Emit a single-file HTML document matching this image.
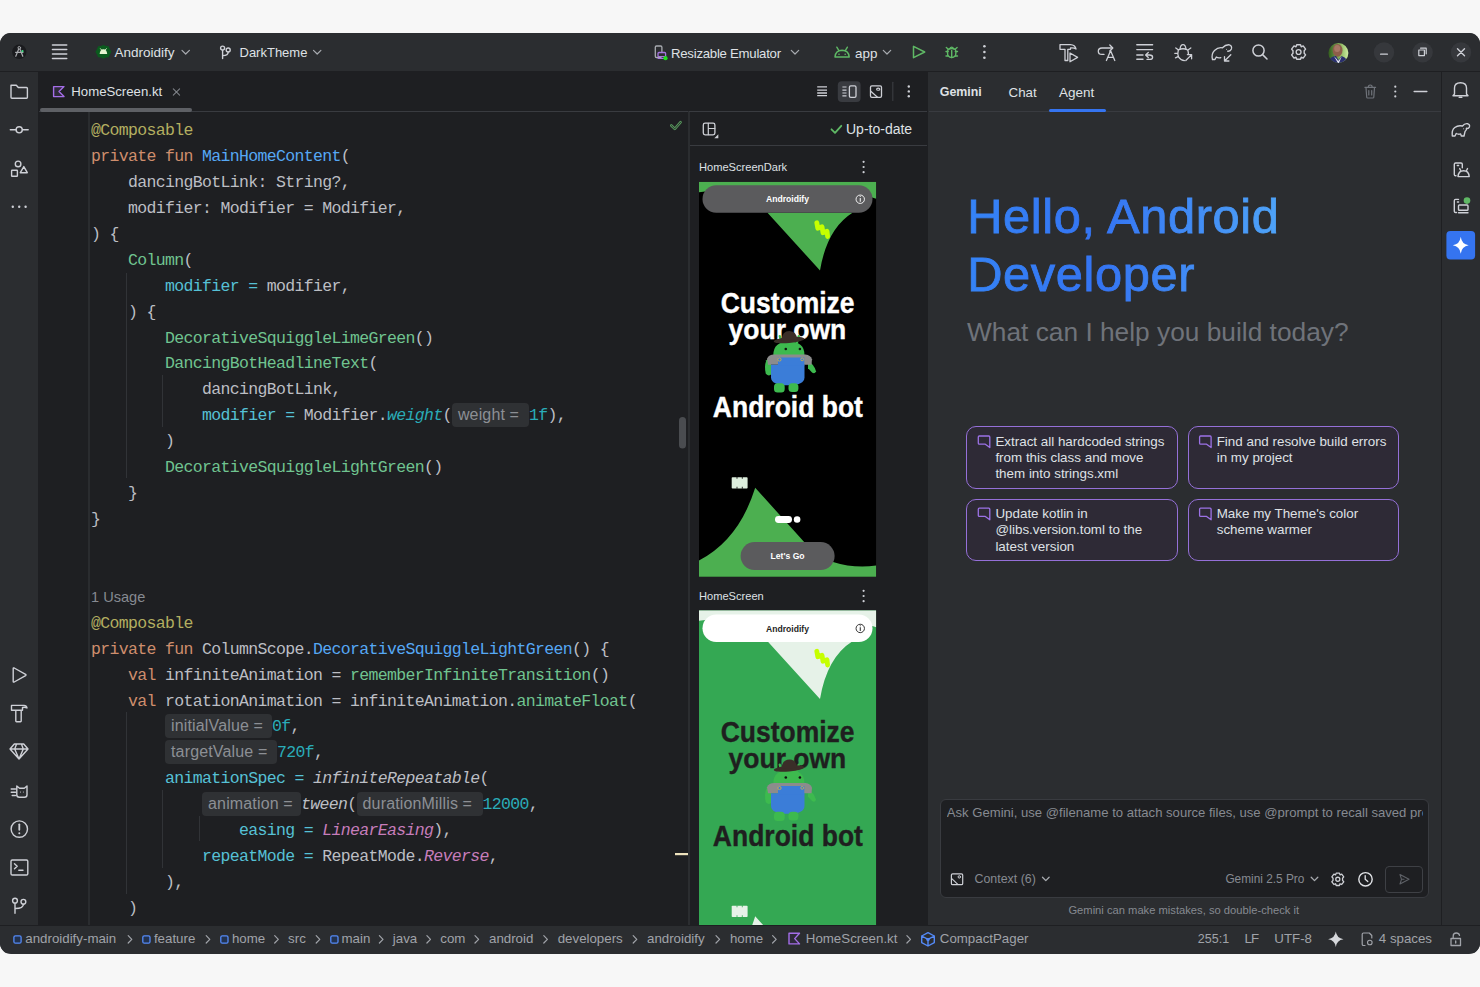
<!DOCTYPE html>
<html><head><meta charset="utf-8">
<style>
*{box-sizing:border-box;margin:0;padding:0}
html,body{width:1480px;height:987px;overflow:hidden;background:#F7F7F7;font-family:"Liberation Sans",sans-serif}
.a{position:absolute}
#win{position:absolute;left:0;top:33px;width:1480px;height:920.5px;border-radius:11px;background:#2B2D30;overflow:hidden}
.ui{color:#DFE1E5;font-size:14px;white-space:nowrap;line-height:1}
.code{font-family:"Liberation Mono",monospace;font-size:16.5px;letter-spacing:-0.65px;color:#BCBEC4;white-space:pre;line-height:25.93px}
.ln{position:absolute;left:91px;height:25.93px}
.kw{color:#CF8E6D}.fn{color:#56A8F5}.an{color:#B3AE60}.cp{color:#70C490}.na{color:#56C1D6}.nu{color:#2AACB8}
.it{font-style:italic}.en{color:#C77DBB;font-style:italic}
.hint{letter-spacing:0.15px;display:inline-block;vertical-align:top;height:23.5px;margin-top:0px;background:#2F3134;border-radius:4px;color:#8C8F94;font-family:"Liberation Sans",sans-serif;font-size:16px;line-height:23px;padding-left:6px}
svg{position:absolute;overflow:visible}
.sb{top:932.3px;font-size:13.3px;line-height:1;color:#A0A3A9;white-space:nowrap}
.card{width:211.5px;height:62.4px;border:1.5px solid #9570D8;border-radius:10px;background:#2E2A36}
.card span{position:absolute;left:28px;top:6.5px;font-size:13.4px;line-height:16.2px;color:#DFE1E5;white-space:nowrap}

</style></head><body>
<div id="win">
  <!-- title bar -->
  <div class="a" style="left:0;top:0;width:1480px;height:39px;background:#2B2D30;border-bottom:1px solid #1E1F22"></div>
  <!-- left strip -->
  <div class="a" style="left:0;top:39px;width:39px;height:854px;background:#2B2D30;border-right:1px solid #1E1F22"></div>
  <!-- editor -->
  <div class="a" style="left:39px;top:39px;width:889px;height:854px;background:#1E1F22"></div>
  <!-- gemini panel -->
  <div class="a" style="left:927px;top:39px;width:515px;height:854px;background:#2B2D30;border-left:1px solid #1E1F22"></div>
  <!-- right strip -->
  <div class="a" style="left:1441px;top:39px;width:39px;height:854px;background:#2B2D30;border-left:1px solid #1E1F22"></div>
  <!-- status bar -->
  <div class="a" style="left:0;top:892px;width:1480px;height:28px;background:#2B2D30;border-top:1px solid #1E1F22"></div>
</div>


<!-- ===== TITLE BAR ===== -->
<svg class="a" style="left:0;top:0" width="1480" height="987" viewBox="0 0 1480 987" fill="none" stroke="#CED0D6" stroke-width="1.4" stroke-linecap="round" stroke-linejoin="round">
  <!-- logo -->
  <circle cx="19.3" cy="51.8" r="7.2" fill="#1A1B1E" stroke="none"/>
  <circle cx="19.3" cy="47.8" r="1.3" stroke="#A9ABAF" stroke-width="1"/>
  <path d="M18.6 49.2 L15.8 56.3 M20 49.2 L22.8 56.3 M15.6 52.3 L23 52.3" stroke="#A9ABAF" stroke-width="1.2"/>
  <circle cx="22.5" cy="51.2" r="1.1" fill="#3DDC84" stroke="none"/>
  <!-- hamburger -->
  <path d="M52.5 45H66.7M52.5 49.5H66.7M52.5 54H66.7M52.5 58.5H66.7" stroke-width="1.6"/>
  <!-- androidify badge -->
  <path d="M103.4 44.9 l2.6 1.1 2.7 0.3 1.1 2.6 1.6 2.9 -1.6 2.9 -1.1 2.6 -2.7 0.3 -2.6 1.1 -2.6 -1.1 -2.7 -0.3 -1.1 -2.6 -1.6 -2.9 1.6 -2.9 1.1 -2.6 2.7 -0.3z" fill="#0B5A1E" stroke="none"/>
  <path d="M99.6 54 Q100 49.5 103.4 49.3 Q106.8 49.5 107.2 54 Z" fill="#E6F5D0" stroke="none"/>
  <path d="M100.5 48.7 L101.6 50 M106.3 48.7 L105.2 50" stroke="#E6F5D0" stroke-width="0.9"/>
  <!-- chevrons -->
  <path d="M182 50.3 L185.7 54 L189.4 50.3" stroke="#A8ABB0" stroke-width="1.2"/>
  <path d="M313.5 50.3 L317.2 54 L320.9 50.3" stroke="#A8ABB0" stroke-width="1.2"/>
  <!-- branch -->
  <circle cx="222.6" cy="48.1" r="2"/><circle cx="228.2" cy="50" r="2"/>
  <path d="M222.6 50.1V58.6 M228.2 52 Q228.2 55.5 222.8 55.6"/>
  <!-- emulator device -->
  <path d="M661 57.5 H656.5 Q655.3 57.5 655.3 56.3 V47.3 Q655.3 46 656.5 46 H660.6 Q661.9 46 661.9 47.3 V51.5" stroke="#A8ABB0" stroke-width="1.3"/>
  <rect x="658" y="52.5" width="7.6" height="4.2" rx="1" stroke="#A776E0" stroke-width="1.3"/>
  <path d="M658 58.5 H664" stroke="#A776E0" stroke-width="1"/>
  <circle cx="665.5" cy="58.2" r="2.1" fill="#1FE01F" stroke="none"/>
  <path d="M791.3 50.3 L795 54 L798.7 50.3" stroke="#A8ABB0" stroke-width="1.2"/>
  <!-- android app icon -->
  <path d="M835 57 Q835.5 50.5 842.1 50.3 Q848.7 50.5 849.2 57 Z" stroke="#5FB865" stroke-width="1.5"/>
  <path d="M836.8 47.2 L838.6 50.2 M847.4 47.2 L845.6 50.2" stroke="#5FB865" stroke-width="1.4"/>
  <circle cx="839" cy="54.3" r="0.8" fill="#5FB865" stroke="none"/><circle cx="845.2" cy="54.3" r="0.8" fill="#5FB865" stroke="none"/>
  <path d="M883.3 50.3 L887 54 L890.7 50.3" stroke="#A8ABB0" stroke-width="1.2"/>
  <!-- run -->
  <path d="M913.5 46.3 V57.7 L924.7 52 Z" stroke="#5FB865" stroke-width="1.5"/>
  <!-- debug bug -->
  <g stroke="#5FB865" stroke-width="1.4">
   <path d="M948 49.5 Q951.7 47.5 955.4 49.5 Q956.5 52 955.6 55.4 Q951.7 59.5 947.8 55.4 Q947 52 948 49.5Z"/>
   <path d="M949.6 48.8 Q951.7 45.5 953.8 48.8 M951.7 50.5V57.5 M946 51.5H948.2M955.3 51.5H957.5M946 56H948.2M955.3 56H957.5M946.3 47.5L948.3 49.2M957.1 47.5L955.1 49.2"/>
  </g>
  <!-- kebab -->
  <circle cx="984.4" cy="46.3" r="1.3" fill="#CED0D6" stroke="none"/><circle cx="984.4" cy="52" r="1.3" fill="#CED0D6" stroke="none"/><circle cx="984.4" cy="57.7" r="1.3" fill="#CED0D6" stroke="none"/>
  <!-- build/run hammer -->
  <path d="M1060 44.6 H1070.5 Q1075 44.8 1076 49 Q1073.5 47.5 1070.5 48 V49.3 H1067.8 V60.5 H1065 V49.3 H1060 Z" stroke-width="1.3"/>
  <path d="M1070 53 V61.8 L1077.6 57.4 Z" stroke-width="1.3"/>
  <!-- apply changes (C-arrow A) -->
  <path d="M1112.5 48 H1102 Q1098.3 48 1098.3 51.2 Q1098.3 54.4 1102 54.4 H1104" stroke-width="1.3"/>
  <path d="M1109.8 45 L1112.8 48 L1109.8 51" stroke-width="1.3"/>
  <path d="M1106.4 60.5 L1110.6 50.8 L1114.8 60.5 M1107.8 57.3 H1113.4" stroke-width="1.3"/>
  <!-- lines w/ return -->
  <path d="M1136.8 44.7H1152.6 M1136.8 49.6H1152.6 M1136.8 55H1143 M1136.8 59.3H1143" stroke-width="1.4"/>
  <path d="M1148.3 52.5 L1145.6 55 L1148.3 57.5 M1145.8 55H1149.5Q1152.6 55 1152.6 57.2Q1152.6 59.4 1149.5 59.4H1147" stroke-width="1.3"/>
  <!-- debug attach -->
  <g stroke-width="1.3">
   <path d="M1178.3 50 Q1183 47.5 1187.7 50 Q1188.6 52.5 1188.4 54 M1178.3 50 Q1177.2 54 1178.6 57.2 Q1181 60.6 1184.5 60.6"/>
   <path d="M1180 49.3 Q1180.5 44.6 1183 44.6 Q1185.5 44.6 1186 49.3 M1174.8 53.3H1177.5 M1175.5 57.8L1178 56.6 M1175.8 48L1178.2 49.8 M1190.8 48L1188.3 49.8"/>
   <path d="M1185.8 60.5 L1191.4 54.9 M1187.4 54.6 H1191.6 V58.8"/>
  </g>
  <!-- elephant sync -->
  <g stroke-width="1.3">
   <path d="M1212.5 59.5 Q1211 54 1214.5 50.5 Q1218 47 1222.5 47.8 Q1225.5 44.5 1229.3 44.8 Q1232.3 45.8 1231.4 49 Q1230.5 51.5 1227.6 51.2"/>
   <path d="M1212.5 59.5 H1215 L1216.3 57 Q1218.5 58.5 1220.8 57.6"/>
   <path d="M1224.5 61 L1230.8 54.7 M1224.5 56.6 V61 H1228.9"/>
   <circle cx="1226.5" cy="49.3" r="0.5" fill="#CED0D6" stroke="none"/>
  </g>
  <!-- search -->
  <circle cx="1258.5" cy="50.5" r="5.6" stroke-width="1.5"/><path d="M1262.6 54.6 L1267 59" stroke-width="1.5"/>
  <!-- gear -->
  <g transform="translate(1298.6 52)" stroke-width="1.4">
   <path d="M-1.9 -7.3 H1.9 L2.6 -5.2 L4.6 -6.1 L7 -2.9 L5.6 -1.2 L5.6 1.2 L7 2.9 L4.6 6.1 L2.6 5.2 L1.9 7.3 H-1.9 L-2.6 5.2 L-4.6 6.1 L-7 2.9 L-5.6 1.2 L-5.6 -1.2 L-7 -2.9 L-4.6 -6.1 L-2.6 -5.2 Z"/>
   <circle r="2.4"/>
  </g>
  <!-- avatar -->
  <defs>
   <linearGradient id="avbg" x1="0" y1="0" x2="1" y2="0"><stop offset="0" stop-color="#2F5A1A"/><stop offset="0.6" stop-color="#8DB860"/><stop offset="1" stop-color="#D4F0A8"/></linearGradient>
   <clipPath id="avc"><circle cx="1338.4" cy="53" r="10"/></clipPath>
  </defs>
  <g clip-path="url(#avc)" stroke="none">
   <rect x="1328" y="42" width="21" height="22" fill="url(#avbg)"/>
   <ellipse cx="1337.6" cy="50.3" rx="4.9" ry="6.4" fill="#8E5E4A"/>
   <ellipse cx="1337.2" cy="48.5" rx="3" ry="3.5" fill="#B48270" opacity="0.7"/>
   <path d="M1328 64 L1330 58.5 Q1333 55.5 1336 56 L1338.5 60 L1341.5 56 Q1345 57 1347 60 L1349 64 Z" fill="#2B2F6E"/>
   <path d="M1334 56.2 L1338.5 64 L1341.8 56.3 L1339.5 59.5 L1338.2 61 L1336.2 58.5 Z" fill="#E6E8F0"/>
  </g>
  <!-- window controls -->
  <circle cx="1384" cy="52.4" r="10.2" fill="#36383C" stroke="none"/>
  <circle cx="1422.6" cy="52.4" r="10.2" fill="#36383C" stroke="none"/>
  <circle cx="1461" cy="52.4" r="10.2" fill="#36383C" stroke="none"/>
  <path d="M1380.6 54.2 H1387.4" stroke-width="1.3"/>
  <rect x="1418.8" y="50" width="5.6" height="5.6" stroke-width="1.2"/>
  <path d="M1420.6 48.2 H1426.2 V53.8" stroke-width="1.2"/>
  <path d="M1457.5 48.8 L1464.5 55.8 M1464.5 48.8 L1457.5 55.8" stroke-width="1.4"/>
</svg>
<div class="a ui" style="left:114.5px;top:46px;font-size:13.5px">Androidify</div>
<div class="a ui" style="left:239.5px;top:46px;font-size:13px">DarkTheme</div>
<div class="a ui" style="left:671px;top:47px;font-size:13.2px;letter-spacing:-0.25px">Resizable Emulator</div>
<div class="a ui" style="left:855px;top:46.5px;font-size:13.4px">app</div>


<!-- ===== STRIPS / TABBAR ICONS ===== -->
<svg class="a" style="left:0;top:0" width="1480" height="987" viewBox="0 0 1480 987" fill="none" stroke="#CED0D6" stroke-width="1.4" stroke-linecap="round" stroke-linejoin="round">
  <!-- left strip top -->
  <path d="M11 85.2 H16.3 L18.3 87.5 H26.5 Q27.4 87.5 27.4 88.4 V97.3 Q27.4 98.2 26.5 98.2 H11.9 Q11 98.2 11 97.3 Z"/>
  <path d="M10.3 129.8 H16 M22.5 129.8 H28.2"/><circle cx="19.2" cy="129.8" r="3.1"/>
  <circle cx="18.1" cy="163.9" r="2.8"/><rect x="11.6" y="170.3" width="5.8" height="6" rx="0.6"/><path d="M23.8 166.6 L27.3 172.7 H20.3 Z"/>
  <circle cx="12.8" cy="206.8" r="1.2" fill="#CED0D6" stroke="none"/><circle cx="19.2" cy="206.8" r="1.2" fill="#CED0D6" stroke="none"/><circle cx="25.6" cy="206.8" r="1.2" fill="#CED0D6" stroke="none"/>
  <!-- left strip bottom -->
  <path d="M13.2 668.6 Q13.2 667.5 14.2 668 L25.6 674.4 Q26.4 675 25.6 675.6 L14.2 682 Q13.2 682.5 13.2 681.4 Z"/>
  <path d="M11.5 705.4 H24 Q26.5 705.4 27 708 Q25 706.8 22.5 707.5 V710.2 H11.5 Z M15.8 710.4 V721 Q15.8 721.7 16.5 721.7 H20.5 Q21.2 721.7 21.2 721 V710.4"/>
  <path d="M14.3 744 H23.7 L28 749 L19 759 L10 749 Z M10 749 H28 M16.5 744.2 L14.7 749 L19 759 L23.3 749 L21.5 744.2"/>
  <path d="M16.8 786 L19.5 788.2 H24.3 L27 786 V794.8 Q27 797.3 24.5 797.3 H19.3 Q16.8 797.3 16.8 794.8 Z M11.2 789 H15.5 M11.2 792.3 H15.5 M12.2 795.5 H15.5"/>
  <circle cx="20.5" cy="792" r="0.55" fill="#CED0D6" stroke="none"/><circle cx="23.4" cy="792" r="0.55" fill="#CED0D6" stroke="none"/>
  <circle cx="19.3" cy="829.1" r="8.2"/><path d="M19.3 824.3 V829.8" stroke-width="1.8"/><circle cx="19.3" cy="833.3" r="1" fill="#CED0D6" stroke="none"/>
  <rect x="11" y="860" width="16.8" height="15" rx="1.3"/><path d="M14.5 863.8 L17.2 866.3 L14.5 868.8 M18.8 870.3 H23"/>
  <circle cx="15" cy="900.7" r="2.4"/><circle cx="23.4" cy="901.8" r="2.4"/><path d="M15 903.1 V913.2 M23.4 904.2 Q23.4 908.5 15.2 908.5"/>
  <!-- right strip -->
  <path d="M1454.5 94 V88 Q1454.5 82.7 1460.5 82.7 Q1466.5 82.7 1466.5 88 V94 L1468 95.8 H1453 Z M1459.2 97.4 H1461.8"/>
  <path d="M1452.3 136 Q1451.5 130 1454.8 127.5 Q1458 125 1462.5 126 Q1464.5 123.3 1467.5 123.7 Q1470.2 124.5 1469.4 127 Q1468.5 129 1466.3 128.4 M1452.3 136 H1455 L1456.2 133.5 Q1458.5 134.7 1460.6 133.9 L1461.3 136 H1464 L1465 131.6 Q1466.8 130 1466.6 128.2"/>
  <circle cx="1463.6" cy="128.8" r="0.5" fill="#CED0D6" stroke="none"/>
  <path d="M1456 175.7 H1455.6 Q1454.3 175.7 1454.3 174.4 V164.3 Q1454.3 163 1455.6 163 H1461 Q1462.3 163 1462.3 164.3 V167.8 M1457.3 165.5 H1458.6"/>
  <path d="M1458 176.6 Q1458.5 170.8 1463.6 170.8 Q1468.7 170.8 1469.2 176.6 Z M1459.7 168.6 L1460.7 170.5 M1467.5 168.6 L1466.5 170.5"/>
  <path d="M1456.5 212.5 H1455.6 Q1454.3 212.5 1454.3 211.2 V200.7 Q1454.3 199.4 1455.6 199.4 H1458.5 M1457.4 202 H1458.6"/>
  <rect x="1458.5" y="205" width="9.5" height="5.3" rx="0.9"/><path d="M1458.5 212.8 H1468"/>
  <circle cx="1467" cy="200.6" r="3.3" fill="#5FB865" stroke="none"/>
  <rect x="1446.4" y="231" width="28.7" height="28.5" rx="4" fill="#3574F0" stroke="none"/>
  <path d="M1460.75 236.8 Q1461.6 244.2 1468.7 245.25 Q1461.6 246.3 1460.75 253.7 Q1459.9 246.3 1452.8 245.25 Q1459.9 244.2 1460.75 236.8 Z" fill="#FFFFFF" stroke="none"/>
  <!-- tab -->
  <path d="M53.6 86.6 H64 L59 91.6 L64 96.6 H53.6 Z" fill="#2E2A3A" stroke="#A46EE8" stroke-width="1.4"/>
  <path d="M173.3 88.8 L179.6 95.1 M179.6 88.8 L173.3 95.1" stroke="#7E8187" stroke-width="1.1"/>
  <!-- editor toolbar -->
  <path d="M817.2 86.9 H827 M817.2 90.2 H827 M817.2 93 H827 M817.2 95.7 H827" stroke-width="1.3" stroke-linecap="butt"/>
  <rect x="837.8" y="81.2" width="22.8" height="20.7" rx="4" fill="#393B40" stroke="none"/>
  <path d="M842.4 87 H846.5 M842.4 90.2 H846.5 M842.4 93 H846.5 M842.4 95.8 H846.5" stroke-width="1.2" stroke-linecap="butt"/>
  <rect x="849.4" y="85.9" width="6.6" height="11.4" rx="1.4" stroke-width="1.3"/>
  <rect x="870.5" y="85.9" width="11" height="11.4" rx="1.4" stroke-width="1.3"/>
  <path d="M870.8 91.2 L877.5 97.2" stroke-width="1.2"/><ellipse cx="878.2" cy="89.2" rx="1.6" ry="1.1" stroke-width="1.1"/>
  <path d="M892.8 82.3 V100.5" stroke="#393B40" stroke-width="1.2"/>
  <circle cx="908.8" cy="86.5" r="1.2" fill="#CED0D6" stroke="none"/><circle cx="908.8" cy="91.4" r="1.2" fill="#CED0D6" stroke="none"/><circle cx="908.8" cy="96.2" r="1.2" fill="#CED0D6" stroke="none"/>
  <!-- editor marks -->
  <path d="M671.3 125.5 L674.8 128.9 L680.6 122.2" stroke="#57965C" stroke-width="2.6"/>
  <path d="M671.3 125.5 L674.8 128.9 L680.6 122.2" stroke="#1E1F22" stroke-width="0.8"/>
  <rect x="679" y="417" width="7" height="31.4" rx="3.5" fill="#4A4C50" stroke="none"/>
  <rect x="675" y="853" width="13.8" height="2.2" fill="#EFE3BE" stroke="none"/>
  <!-- preview toolbar -->
  <rect x="703.3" y="123.2" width="11.6" height="11.6" rx="1.8" stroke-width="1.3"/><path d="M708.3 123.4 V134.6 M708.3 128.5 H714.8" stroke-width="1.2"/>
  <path d="M718.3 134.2 V138.2 H714.3 Z" fill="#CED0D6" stroke="none"/>
  <path d="M831.5 129.3 L835 132.8 L841.3 125.8" stroke="#5FB865" stroke-width="1.8"/>
  <circle cx="863.6" cy="161.8" r="1.1" fill="#CED0D6" stroke="none"/><circle cx="863.6" cy="167" r="1.1" fill="#CED0D6" stroke="none"/><circle cx="863.6" cy="172.2" r="1.1" fill="#CED0D6" stroke="none"/>
  <circle cx="863.6" cy="590.8" r="1.1" fill="#CED0D6" stroke="none"/><circle cx="863.6" cy="596" r="1.1" fill="#CED0D6" stroke="none"/><circle cx="863.6" cy="601.2" r="1.1" fill="#CED0D6" stroke="none"/>
</svg>
<div class="a ui" style="left:71.3px;top:85px;font-size:13.2px">HomeScreen.kt</div>
<div class="a ui" style="left:846px;top:122px;font-size:14px">Up-to-date</div>
<div class="a ui" style="left:699px;top:161.5px;font-size:11.1px">HomeScreenDark</div>
<div class="a ui" style="left:699px;top:590.5px;font-size:11.1px">HomeScreen</div>


<!-- ===== GEMINI PANEL ===== -->
<div class="a" style="left:929px;top:111px;width:512px;height:1px;background:#393B40"></div>
<div class="a" style="left:1048.7px;top:108.5px;width:57.3px;height:3px;border-radius:2px;background:#3574F0"></div>
<div class="a ui" style="left:939.8px;top:86px;font-size:12.4px;font-weight:700">Gemini</div>
<div class="a ui" style="left:1008.6px;top:86px;font-size:13.3px">Chat</div>
<div class="a ui" style="left:1059px;top:86px;font-size:13.5px">Agent</div>
<svg class="a" style="left:0;top:0" width="1480" height="987" viewBox="0 0 1480 987">
 <defs><linearGradient id="hg" gradientUnits="userSpaceOnUse" x1="969" y1="0" x2="1280" y2="0"><stop offset="0" stop-color="#3583F6"/><stop offset="0.42" stop-color="#3474F3"/><stop offset="1" stop-color="#4EA3F8"/></linearGradient></defs>
 <g font-family="Liberation Sans" font-size="48.8" letter-spacing="0.6" fill="url(#hg)" stroke="url(#hg)" stroke-width="0.8">
  <text x="967.2" y="233.4">Hello, Android</text>
  <text x="967.2" y="290.6">Developer</text>
 </g>
</svg>
<div class="a" style="left:967px;top:319px;font-size:26.3px;line-height:1;white-space:nowrap;color:#6F737A">What can I help you build today?</div>
<div class="a card" style="left:966.4px;top:426.4px"><span>Extract all hardcoded strings<br>from this class and move<br>them into strings.xml</span></div>
<div class="a card" style="left:1187.7px;top:426.4px"><span>Find and resolve build errors<br>in my project</span></div>
<div class="a card" style="left:966.4px;top:498.6px"><span>Update kotlin in<br>@libs.version.toml to the<br>latest version</span></div>
<div class="a card" style="left:1187.7px;top:498.6px"><span>Make my Theme's color<br>scheme warmer</span></div>
<!-- input -->
<div class="a" style="left:940px;top:799.3px;width:488.5px;height:98.4px;border:1px solid #393B40;border-radius:6px;background:#1E1F22"></div>
<div class="a" style="left:946.8px;top:806px;width:476px;overflow:hidden;font-size:13.1px;line-height:1;white-space:nowrap;color:#868A91">Ask Gemini, use @filename to attach source files, use @prompt to recall saved prompts</div>
<div class="a" style="left:974.5px;top:873.3px;font-size:12.4px;line-height:1;white-space:nowrap;color:#868A91">Context (6)</div>
<div class="a" style="left:1225.4px;top:874px;font-size:11.85px;line-height:1;white-space:nowrap;color:#868A91">Gemini 2.5 Pro</div>
<div class="a" style="left:1068.4px;top:904.5px;font-size:11.2px;line-height:1;white-space:nowrap;color:#868A91">Gemini can make mistakes, so double-check it</div>
<svg class="a" style="left:0;top:0" width="1480" height="987" viewBox="0 0 1480 987" fill="none" stroke="#CED0D6" stroke-width="1.3" stroke-linecap="round" stroke-linejoin="round">
  <g stroke="#6F737A" stroke-width="1.2"><path d="M1364.9 87.3 H1375.6 M1368.3 87.2 Q1368.3 85 1370.2 85 Q1372.2 85 1372.2 87.2 M1366 87.5 L1366.7 97.2 Q1366.8 98 1367.6 98 H1372.9 Q1373.7 98 1373.8 97.2 L1374.5 87.5 M1368.8 90.5 V95 M1371.7 90.5 V95"/></g>
  <circle cx="1395.3" cy="86.7" r="1.1" fill="#CED0D6" stroke="none"/><circle cx="1395.3" cy="91.5" r="1.1" fill="#CED0D6" stroke="none"/><circle cx="1395.3" cy="96.4" r="1.1" fill="#CED0D6" stroke="none"/>
  <path d="M1414.2 91.4 H1426.8" stroke-width="1.5"/>
  <!-- card icons -->
  <g stroke="#9C72E6" stroke-width="1.3">
    <path d="M979.3 436 H988.8 Q989.8 436 989.8 437 V447.6 L985.3 444.2 H979.3 Q978.3 444.2 978.3 443.2 V437.0 Q978.3 436 979.3 436 Z"/>
    <path d="M1200.6 436 H1210.1 Q1211.1 436 1211.1 437 V447.6 L1206.6 444.2 H1200.6 Q1199.6 444.2 1199.6 443.2 V437.0 Q1199.6 436 1200.6 436 Z"/>
    <path d="M979.3 508.2 H988.8 Q989.8 508.2 989.8 509.2 V519.8 L985.3 516.4 H979.3 Q978.3 516.4 978.3 515.4 V509.2 Q978.3 508.2 979.3 508.2 Z"/>
    <path d="M1200.6 508.2 H1210.1 Q1211.1 508.2 1211.1 509.2 V519.8 L1206.6 516.4 H1200.6 Q1199.6 516.4 1199.6 515.4 V509.2 Q1199.6 508.2 1200.6 508.2 Z"/>
  </g>
  <!-- input icons -->
  <rect x="951.4" y="873.8" width="11.3" height="10.9" rx="1.3" stroke-width="1.2"/>
  <path d="M951.8 878.7 L957.8 884.4" stroke-width="1.1"/><circle cx="959.3" cy="876.9" r="1.2" stroke-width="1"/>
  <path d="M1042.5 877.3 L1045.8 880.6 L1049.1 877.3" stroke="#A8ABB0" stroke-width="1.3"/>
  <path d="M1311.2 877.3 L1314.5 880.6 L1317.8 877.3" stroke="#A8ABB0" stroke-width="1.3"/>
  <g transform="translate(1337.8 879.3) scale(0.85)" stroke-width="1.5">
   <path d="M-1.9 -7.3 H1.9 L2.6 -5.2 L4.6 -6.1 L7 -2.9 L5.6 -1.2 L5.6 1.2 L7 2.9 L4.6 6.1 L2.6 5.2 L1.9 7.3 H-1.9 L-2.6 5.2 L-4.6 6.1 L-7 2.9 L-5.6 1.2 L-5.6 -1.2 L-7 -2.9 L-4.6 -6.1 L-2.6 -5.2 Z"/>
   <circle r="2.4"/>
  </g>
  <circle cx="1365.5" cy="879.3" r="6.7" stroke="#E0E2E6" stroke-width="1.4"/><path d="M1365.2 875.6 V879.3 L1367.8 881.6" stroke="#E0E2E6" stroke-width="1.3"/>
  <rect x="1385.5" y="866.5" width="37" height="26" rx="3.5" stroke="#3E4045" stroke-width="1"/>
  <path d="M1400 874.6 L1409 879.3 L1400 884 L1401.5 879.3 Z M1401.5 879.3 H1404" stroke="#5E6167" stroke-width="1.1"/>
</svg>


<!-- ===== STATUS BAR ===== -->
<div class="a sb" style="left:25.3px">androidify-main</div>
<div class="a sb" style="left:153.9px">feature</div>
<div class="a sb" style="left:231.9px">home</div>
<div class="a sb" style="left:288.1px">src</div>
<div class="a sb" style="left:341.5px">main</div>
<div class="a sb" style="left:392.8px">java</div>
<div class="a sb" style="left:440.3px">com</div>
<div class="a sb" style="left:489px">android</div>
<div class="a sb" style="left:557.7px">developers</div>
<div class="a sb" style="left:647px">androidify</div>
<div class="a sb" style="left:729.9px">home</div>
<div class="a sb" style="left:805.8px">HomeScreen.kt</div>
<div class="a sb" style="left:939.8px">CompactPager</div>
<div class="a sb" style="left:1197.8px;font-size:12.5px;top:933px">255:1</div>
<div class="a sb" style="left:1244.5px;letter-spacing:-1px">LF</div>
<div class="a sb" style="left:1274.3px">UTF-8</div>
<div class="a sb" style="left:1378.8px">4 spaces</div>
<svg class="a" style="left:0;top:0" width="1480" height="987" viewBox="0 0 1480 987" fill="none" stroke="#A0A3A9" stroke-width="1.2" stroke-linecap="round" stroke-linejoin="round">
  <path d="M128.2 935.6 L131.8 939.3 L128.2 943 M206.2 935.6 L209.8 939.3 L206.2 943 M274.7 935.6 L278.3 939.3 L274.7 943 M316.2 935.6 L319.8 939.3 L316.2 943 M379.4 935.6 L383.0 939.3 L379.4 943 M426.9 935.6 L430.5 939.3 L426.9 943 M475.0 935.6 L478.6 939.3 L475.0 943 M543.8 935.6 L547.4 939.3 L543.8 943 M633.2 935.6 L636.8 939.3 L633.2 943 M716.0 935.6 L719.6 939.3 L716.0 943 M772.6 935.6 L776.2 939.3 L772.6 943 M906.9 935.6 L910.5 939.3 L906.9 943"/>
  <rect x="13.9" y="935.8" width="7.2" height="7.4" rx="1.5" fill="#22324F" stroke="#548AF7" stroke-width="1.3"/>
<rect x="142.8" y="935.8" width="7.2" height="7.4" rx="1.5" fill="#22324F" stroke="#548AF7" stroke-width="1.3"/>
<rect x="220.8" y="935.8" width="7.2" height="7.4" rx="1.5" fill="#22324F" stroke="#548AF7" stroke-width="1.3"/>
<rect x="330.8" y="935.8" width="7.2" height="7.4" rx="1.5" fill="#22324F" stroke="#548AF7" stroke-width="1.3"/>
  <path d="M789 933.3 H799.5 L794.7 938.6 L799.5 943.9 H789 Z" fill="#2E2A3A" stroke="#A46EE8" stroke-width="1.4"/>
  <path d="M928 932.6 L934.3 936 V942.6 L928 946 L921.7 942.6 V936 Z M921.7 936 L928 939.4 L934.3 936 M928 939.4 V946" stroke="#548AF7" stroke-width="1.4"/>
  <circle cx="928" cy="939.6" r="1.7" fill="#548AF7" stroke="none"/>
  <path d="M1335.8 931.6 Q1336.7 938.3 1343.5 939.3 Q1336.7 940.3 1335.8 947 Q1334.9 940.3 1328.1 939.3 Q1334.9 938.3 1335.8 931.6 Z" fill="#D6D8DC" stroke="none"/>
  <path d="M1365 945.5 H1363.5 Q1362.2 945.5 1362.2 944.2 V934.3 Q1362.2 933 1363.5 933 H1369.3 L1371.8 935.5 V938" stroke-width="1.2"/>
  <circle cx="1369.8" cy="942.5" r="2.3" stroke-width="1.1"/>
  <path d="M1451 938.5 H1460.5 V945.5 H1451 Z M1453.2 938.5 V936 Q1453.2 933 1456.3 933 Q1459 933 1459.5 935.3" stroke-width="1.3"/>
  <path d="M1455.7 941 V943" stroke-width="1.4"/>
</svg>

<!-- ===== PREVIEW ===== -->
<svg class="a" style="left:0;top:0" width="1480" height="987" viewBox="0 0 1480 987">
<clipPath id="ph1"><rect x="0" y="0" width="177.25" height="395"/></clipPath>
<g transform="translate(699 181.75)" clip-path="url(#ph1)">
 <rect x="0" y="0" width="177.25" height="395" fill="#000000"/>
 <path d="M0 0 H177.25 V17 Q150 7 88 6 Q30 6 0 10.6 Z" fill="#4CAF50"/>
 <path d="M68.5 31 H153.5 Q128 47 121 88.75 Z" fill="#4CAF50"/>
 <path d="M117.8 41 L118.8 46.5 L123 45 L124 51 L128 49.5 L128.6 54.8" stroke="#C6FF00" stroke-width="4.8" stroke-linecap="round" stroke-linejoin="round" fill="none"/>
 <rect x="3.5" y="3.5" width="170" height="27.5" rx="13.75" fill="#5B5B5D"/>
 <text x="88.5" y="20.6" text-anchor="middle" font-family="Liberation Sans" font-weight="700" font-size="8.6" fill="#FFFFFF">Androidify</text>
 <circle cx="161.25" cy="17.5" r="4.2" stroke="#FFFFFF" stroke-width="0.9" fill="none"/>
 <path d="M161.25 16.3 V20" stroke="#FFFFFF" stroke-width="1"/>
 <circle cx="161.25" cy="14.8" r="0.55" fill="#FFFFFF"/>
 <text transform="translate(88.6 131.3) scale(1 1.1)" text-anchor="middle" font-family="Liberation Sans" font-weight="700" font-size="26.5" fill="#FFFFFF" stroke="#FFFFFF" stroke-width="0.35">Customize</text>
 <text transform="translate(88.4 157.7) scale(1 1.07)" text-anchor="middle" font-family="Liberation Sans" font-weight="700" font-size="26.5" fill="#FFFFFF" stroke="#FFFFFF" stroke-width="0.35">your own</text>
 <text transform="translate(88.9 235.3) scale(1 1.1)" text-anchor="middle" font-family="Liberation Sans" font-weight="700" font-size="26.5" fill="#FFFFFF" stroke="#FFFFFF" stroke-width="0.35">Android bot</text>
 <!-- bot -->
 <g>
  <path d="M82.5 160.5 L80.8 154.5 M98 160.5 L99.7 154.5" stroke="#3DBA4E" stroke-width="2.4" stroke-linecap="round"/>
  <path d="M74.3 173.5 Q74.3 159.8 90 159.8 Q105.5 159.8 105.5 173.5 Z" fill="#3DBA4E"/>
  <circle cx="86.8" cy="167.3" r="1.3" fill="#111"/><circle cx="100.9" cy="167.3" r="1.3" fill="#111"/>
  <ellipse cx="90" cy="158.3" rx="15.3" ry="3" fill="#3A2E28" transform="rotate(-5 90 158.3)"/>
  <path d="M82.5 158.5 Q83 149.3 90.5 149.2 Q97.5 149.5 98.2 157.5 Z" fill="#3A2E28"/>
  <path d="M66.8 192 Q65 185 67.3 178.5 Q69 176.5 71.5 177.5 L72.8 192 Q70 195.5 66.8 192 Z" fill="#3DBA4E"/>
  <path d="M109 179.5 Q114.8 182 117 189.5 Q116 192.3 113.3 191 L109 186.5 Z" fill="#3DBA4E"/>
  <path d="M68 177 Q70 172.8 75 172.8 H106.5 Q111.5 173.3 113 177.5 L112.5 183 H69 Z" fill="#8C8C8C"/>
  <path d="M72 183 H105.5 V195.5 Q105.5 203.5 89 203.5 Q72 203.5 72 195.5 Z" fill="#3B7DD8"/>
  <path d="M79 175.8 H105.3 V184 H79 Z" fill="#3B7DD8"/>
  <rect x="75" y="201.5" width="10.7" height="9.2" rx="3.5" fill="#3DBA4E"/><rect x="89.5" y="201.5" width="9.9" height="8.8" rx="3.5" fill="#3DBA4E"/>
  <circle cx="80.5" cy="177.8" r="1.6" stroke="#D9B23A" stroke-width="0.8" fill="none"/><circle cx="103.2" cy="177.6" r="1.4" stroke="#D9B23A" stroke-width="0.8" fill="none"/>
 </g>
 <path d="M33.5 295.5 H47.8 Q48.6 295.5 48.6 296.3 V306 Q48.6 306.8 47.8 306.8 H33.5 Q32.7 306.8 32.7 306 V296.3 Q32.7 295.5 33.5 295.5 Z" fill="#DDEEDD"/>
 <path d="M38 295 V307 M43.3 295 V307" stroke="#000000" stroke-width="0.8" stroke-dasharray="2 8"/>
 <path d="M0 378.75 Q40 358 56.2 306.05 L104.7 359.65 Q118 375 134 380.25 Q155 387 177.25 383.85 V400 H0 Z" fill="#4CAF50"/>
 <rect x="76" y="334.35" width="17" height="6.9" rx="3.45" fill="#FFFFFF"/>
 <circle cx="98.1" cy="337.8" r="3.3" fill="#FFFFFF"/>
 <rect x="41.6" y="360.35" width="94" height="27.9" rx="13.95" fill="#5B5B5D"/>
 <text x="88.6" y="377.5" text-anchor="middle" font-family="Liberation Sans" font-weight="700" font-size="8.6" fill="#FFFFFF">Let's Go</text>
</g>
<clipPath id="ph2"><rect x="0" y="0" width="177.25" height="314.75"/></clipPath>
<g transform="translate(699 610.25)" clip-path="url(#ph2)">
 <rect x="0" y="0" width="177.25" height="314.75" fill="#34A853"/>
 <path d="M0 0 H177.25 V17 Q150 7 88 6 Q30 6 0 10.6 Z" fill="#E6F2E8"/>
 <path d="M68.5 31 H153.5 Q128 47 121 88.75 Z" fill="#E6F2E8"/>
 <path d="M117.8 41 L118.8 46.5 L123 45 L124 51 L128 49.5 L128.6 54.8" stroke="#C6FF00" stroke-width="4.8" stroke-linecap="round" stroke-linejoin="round" fill="none"/>
 <rect x="3.5" y="4.2" width="170" height="27.5" rx="13.75" fill="#FFFFFF"/>
 <text x="88.5" y="21.3" text-anchor="middle" font-family="Liberation Sans" font-weight="700" font-size="8.6" fill="#1F1F1F">Androidify</text>
 <circle cx="161.25" cy="18.2" r="4.2" stroke="#1F1F1F" stroke-width="0.9" fill="none"/>
 <path d="M161.25 17 V20.7" stroke="#1F1F1F" stroke-width="1"/>
 <circle cx="161.25" cy="15.5" r="0.55" fill="#1F1F1F"/>
 <text transform="translate(88.6 131.3) scale(1 1.1)" text-anchor="middle" font-family="Liberation Sans" font-weight="700" font-size="26.5" fill="#1F1F1F" stroke="#1F1F1F" stroke-width="0.35">Customize</text>
 <text transform="translate(88.4 157.7) scale(1 1.07)" text-anchor="middle" font-family="Liberation Sans" font-weight="700" font-size="26.5" fill="#1F1F1F" stroke="#1F1F1F" stroke-width="0.35">your own</text>
 <text transform="translate(88.9 235.3) scale(1 1.1)" text-anchor="middle" font-family="Liberation Sans" font-weight="700" font-size="26.5" fill="#1F1F1F" stroke="#1F1F1F" stroke-width="0.35">Android bot</text>
 <!-- bot -->
 <g>
  <path d="M82.5 160.5 L80.8 154.5 M98 160.5 L99.7 154.5" stroke="#3DBA4E" stroke-width="2.4" stroke-linecap="round"/>
  <path d="M74.3 173.5 Q74.3 159.8 90 159.8 Q105.5 159.8 105.5 173.5 Z" fill="#3DBA4E"/>
  <circle cx="86.8" cy="167.3" r="1.3" fill="#111"/><circle cx="100.9" cy="167.3" r="1.3" fill="#111"/>
  <ellipse cx="90" cy="158.3" rx="15.3" ry="3" fill="#3A2E28" transform="rotate(-5 90 158.3)"/>
  <path d="M82.5 158.5 Q83 149.3 90.5 149.2 Q97.5 149.5 98.2 157.5 Z" fill="#3A2E28"/>
  <path d="M66.8 192 Q65 185 67.3 178.5 Q69 176.5 71.5 177.5 L72.8 192 Q70 195.5 66.8 192 Z" fill="#3DBA4E"/>
  <path d="M109 179.5 Q114.8 182 117 189.5 Q116 192.3 113.3 191 L109 186.5 Z" fill="#3DBA4E"/>
  <path d="M68 177 Q70 172.8 75 172.8 H106.5 Q111.5 173.3 113 177.5 L112.5 183 H69 Z" fill="#8C8C8C"/>
  <path d="M72 183 H105.5 V195.5 Q105.5 203.5 89 203.5 Q72 203.5 72 195.5 Z" fill="#3B7DD8"/>
  <path d="M79 175.8 H105.3 V184 H79 Z" fill="#3B7DD8"/>
  <rect x="75" y="201.5" width="10.7" height="9.2" rx="3.5" fill="#3DBA4E"/><rect x="89.5" y="201.5" width="9.9" height="8.8" rx="3.5" fill="#3DBA4E"/>
  <circle cx="80.5" cy="177.8" r="1.6" stroke="#D9B23A" stroke-width="0.8" fill="none"/><circle cx="103.2" cy="177.6" r="1.4" stroke="#D9B23A" stroke-width="0.8" fill="none"/>
 </g>
 <path d="M33.5 295.5 H47.8 Q48.6 295.5 48.6 296.3 V306 Q48.6 306.8 47.8 306.8 H33.5 Q32.7 306.8 32.7 306 V296.3 Q32.7 295.5 33.5 295.5 Z" fill="#E6F2E8"/>
 <path d="M38 295 V307 M43.3 295 V307" stroke="#34A853" stroke-width="0.8" stroke-dasharray="2 8"/>
 <path d="M0 378.75 Q40 358 56.2 306.05 L104.7 359.65 Q118 375 134 380.25 Q155 387 177.25 383.85 V400 H0 Z" fill="#E6F2E8"/>
 <rect x="76" y="334.35" width="17" height="6.9" rx="3.45" fill="#FFFFFF"/>
 <circle cx="98.1" cy="337.8" r="3.3" fill="#FFFFFF"/>
 <rect x="41.6" y="360.35" width="94" height="27.9" rx="13.95" fill="#5B5B5D"/>
 <text x="88.6" y="377.5" text-anchor="middle" font-family="Liberation Sans" font-weight="700" font-size="8.6" fill="#FFFFFF">Let's Go</text>
</g>
</svg>
<!-- ===== /PREVIEW ===== -->
<!-- indent guides -->
<div class="a" style="left:126px;top:272.8px;width:1px;height:205.1px;background:#313337"></div>
<div class="a" style="left:162px;top:375.3px;width:1px;height:51.3px;background:#313337"></div>
<div class="a" style="left:126px;top:711.5px;width:1px;height:182.9px;background:#313337"></div>
<div class="a" style="left:162px;top:789.6px;width:1px;height:78.0px;background:#313337"></div>
<div class="a" style="left:199px;top:816.4px;width:1px;height:24.6px;background:#313337"></div>
<!-- editor gutter line -->
<div class="a" style="left:88px;top:112px;width:2px;height:813px;background:#2A2C2F"></div>
<!-- tab bar bottom line -->
<div class="a" style="left:39px;top:111px;width:650px;height:1px;background:#393B40"></div>
<div class="a" style="left:40px;top:108px;width:152px;height:4px;border-radius:2px;background:#5E6065"></div>
<!-- preview separator -->
<div class="a" style="left:688px;top:111px;width:2px;height:814px;background:#2B2D30"></div>
<div class="a" style="left:689px;top:111px;width:238px;height:1px;background:#393B40"></div>
<div class="a" style="left:690px;top:145px;width:237px;height:1px;background:#393B40"></div>
<div class="ln code" style="top:118.10px"><span class="an">@Composable</span></div>
<div class="ln code" style="top:144.03px"><span class="kw">private fun </span><span class="fn">MainHomeContent</span>(</div>
<div class="ln code" style="top:169.96px">    dancingBotLink: String?,</div>
<div class="ln code" style="top:195.89px">    modifier: Modifier = Modifier,</div>
<div class="ln code" style="top:221.82px">) {</div>
<div class="ln code" style="top:247.75px">    <span class="cp">Column</span>(</div>
<div class="ln code" style="top:273.68px">        <span class="na">modifier =</span> modifier,</div>
<div class="ln code" style="top:299.61px">    ) {</div>
<div class="ln code" style="top:325.54px">        <span class="cp">DecorativeSquiggleLimeGreen</span>()</div>
<div class="ln code" style="top:351.47px">        <span class="cp">DancingBotHeadlineText</span>(</div>
<div class="ln code" style="top:377.40px">            dancingBotLink,</div>
<div class="ln code" style="top:403.33px">            <span class="na">modifier =</span> Modifier.<span class="nu it">weight</span>(<span class="hint" style="width:77px">weight =</span><span class="nu">1f</span>),</div>
<div class="ln code" style="top:429.26px">        )</div>
<div class="ln code" style="top:455.19px">        <span class="cp">DecorativeSquiggleLightGreen</span>()</div>
<div class="ln code" style="top:481.12px">    }</div>
<div class="ln code" style="top:507.05px">}</div>
<div class="ln code" style="top:532.98px"></div>
<div class="ln code" style="top:558.91px"></div>
<div class="ln code" style="top:584.84px"><span style="font-family:'Liberation Sans',sans-serif;letter-spacing:0;font-size:14.6px;color:#868A91">1 Usage</span></div>
<div class="ln code" style="top:610.77px"><span class="an">@Composable</span></div>
<div class="ln code" style="top:636.70px"><span class="kw">private fun </span>ColumnScope.<span class="fn">DecorativeSquiggleLightGreen</span>() {</div>
<div class="ln code" style="top:662.63px">    <span class="kw">val </span>infiniteAnimation = <span class="cp">rememberInfiniteTransition</span>()</div>
<div class="ln code" style="top:688.56px">    <span class="kw">val </span>rotationAnimation = infiniteAnimation.<span class="cp">animateFloat</span>(</div>
<div class="ln code" style="top:714.49px">        <span class="hint" style="width:107px">initialValue =</span><span class="nu">0f</span>,</div>
<div class="ln code" style="top:740.42px">        <span class="hint" style="width:112px">targetValue =</span><span class="nu">720f</span>,</div>
<div class="ln code" style="top:766.35px">        <span class="na">animationSpec =</span> <span class="it">infiniteRepeatable</span>(</div>
<div class="ln code" style="top:792.28px">            <span class="hint" style="width:99px">animation =</span><span class="it">tween</span>(<span class="hint" style="width:126px">durationMillis =</span><span class="nu">12000</span>,</div>
<div class="ln code" style="top:818.21px">                <span class="na">easing =</span> <span class="en">LinearEasing</span>),</div>
<div class="ln code" style="top:844.14px">            <span class="na">repeatMode =</span> RepeatMode.<span class="en">Reverse</span>,</div>
<div class="ln code" style="top:870.07px">        ),</div>
<div class="ln code" style="top:896.00px">    )</div>
</body></html>
